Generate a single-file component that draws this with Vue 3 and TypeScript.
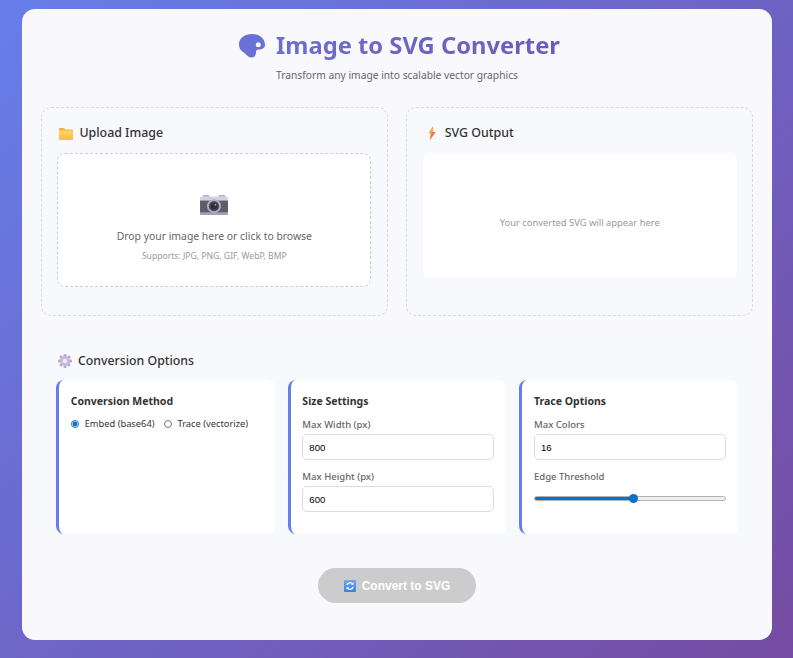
<template>
  <div class="page">
    <main class="card">
      <header class="head">
        <h1 class="title">
          <svg class="palette" viewBox="0 0 26 24" width="26" height="24">
            <path d="M0 10C0 4 6 0 13 0c7 0 13 4.500 13 11 0 3-3 4.500-6 4.500-2.500 0-3 1-3 3 0 3-2 5-4.500 5-3.500 0-5-3-7.500-5C2 17 0 14.500 0 10z" fill="#6a70d8" />
            <circle cx="19.300" cy="10.800" r="2.500" fill="#f8f8fd" />
          </svg>
          <span class="title-text">Image to SVG Converter</span>
        </h1>
        <p class="sub">Transform any image into scalable vector graphics</p>
      </header>

      <section class="panels">
        <div class="panel">
          <h2 class="panel-title">
            <svg viewBox="0 0 14 13" width="14" height="13">
              <defs>
                <linearGradient id="folder" x1="0" y1="0" x2="0" y2="1">
                  <stop offset="0" stop-color="#ffd65f" />
                  <stop offset="1" stop-color="#ffb84f" />
                </linearGradient>
              </defs>
              <path d="M0 2a1 1 0 0 1 1-1h4l1.500 1.500H13a1 1 0 0 1 1 1V12a1 1 0 0 1-1 1H1a1 1 0 0 1-1-1z" fill="#f7b23c" />
              <rect x="0" y="3.500" width="14" height="9.500" rx="1" fill="url(#folder)" />
            </svg>
            Upload Image
          </h2>
          <div class="drop">
            <svg class="camera" viewBox="0 0 30 21.500" width="30" height="20">
              <rect x="3" y="0" width="7" height="3" rx="1" fill="#b9b0cc" />
              <rect x="20" y="0" width="7" height="3" rx="1" fill="#b9b0cc" />
              <rect x="0" y="1.500" width="30" height="20" rx="2" fill="#d5cde2" />
              <rect x="0" y="6" width="30" height="13" fill="#5f5e68" />
              <rect x="0" y="19" width="30" height="2.500" fill="#a79cc0" />
              <circle cx="15" cy="12" r="7.500" fill="#b3adc0" />
              <circle cx="15" cy="12" r="5.500" fill="#4a4756" />
              <circle cx="15" cy="12" r="3.500" fill="#2f2c3d" />
              <circle cx="16.500" cy="10.500" r="1" fill="#9a96b0" />
            </svg>
            <p class="drop-text">Drop your image here or click to browse</p>
            <p class="drop-hint">Supports: JPG, PNG, GIF, WebP, BMP</p>
          </div>
        </div>
        <div class="panel">
          <h2 class="panel-title">
            <svg viewBox="-3 0 14 14" width="14" height="14">
              <path d="M5 0 .5 7.500H3L2 14l5.500-8H5z" fill="#f8a04a" />
              <path d="M3 7.500 2 14l5.500-8H5z" fill="#f2704a" />
            </svg>
            SVG Output
          </h2>
          <div class="output">Your converted SVG will appear here</div>
        </div>
      </section>

      <section class="options">
        <h2 class="options-title">
          <svg viewBox="0 0 14 14" width="14" height="14">
            <g fill="#b9a9d2">
              <rect v-for="a in [0, 45, 90, 135]" :key="a" x="5.500" y="0" width="3" height="14" rx="1" :transform="`rotate(${a} 7 7)`" />
            </g>
            <circle cx="7" cy="7" r="4.800" fill="#c6b9d9" />
            <circle cx="7" cy="7" r="2.300" fill="#f0ecf6" />
          </svg>
          Conversion Options
        </h2>
        <div class="option-grid">
          <div class="opt">
            <h3>Conversion Method</h3>
            <div class="radios">
              <label><input v-model="method" type="radio" value="embed" />Embed (base64)</label>
              <label><input v-model="method" type="radio" value="trace" />Trace (vectorize)</label>
            </div>
          </div>
          <div class="opt">
            <h3>Size Settings</h3>
            <label class="field">Max Width (px)<input v-model="maxWidth" type="number" /></label>
            <label class="field">Max Height (px)<input v-model="maxHeight" type="number" /></label>
          </div>
          <div class="opt">
            <h3>Trace Options</h3>
            <label class="field">Max Colors<input v-model="maxColors" type="number" /></label>
            <label class="field">Edge Threshold<input v-model="edge" class="range" type="range" min="0" max="100" :style="{ '--pct': edge + '%' }" /></label>
          </div>
        </div>
      </section>

      <div class="actions">
        <button type="button" class="convert" disabled>
          <svg viewBox="0 0 12 12" width="12" height="12">
            <defs>
              <linearGradient id="sync" x1="0" y1="0" x2="0" y2="1">
                <stop offset="0" stop-color="#6ea6f2" />
                <stop offset="1" stop-color="#3f7fe0" />
              </linearGradient>
            </defs>
            <rect width="12" height="12" rx="1" fill="url(#sync)" />
            <path d="M2.800 5.200A3.300 3.300 0 0 1 8.600 4M9.200 6.800A3.300 3.300 0 0 1 3.400 8" fill="none" stroke="#fff" stroke-width="1.200" />
            <path d="M9.500 2.200v2.600H6.900zM2.500 9.800V7.200h2.600z" fill="#fff" />
          </svg>
          Convert to SVG
        </button>
      </div>
    </main>
  </div>
</template>

<script setup lang="ts">
import { ref } from 'vue'

const method = ref('embed')
const maxWidth = ref(800)
const maxHeight = ref(600)
const maxColors = ref(16)
const edge = ref(52)
</script>

<style>
html, body { margin: 0; }
</style>

<style scoped>
.page { box-sizing: border-box; height: 658px; padding: 9px 21px 18px 22px; background: linear-gradient(135deg, #667eea 0%, #764ba2 100%); font-family: "Noto Sans", "Open Sans", "Liberation Sans", sans-serif; color: #333; overflow: hidden; }
.card { box-sizing: border-box; height: 631px; background: #f8f8fd; border-radius: 13px; padding: 17px 19px 0; }
.head { text-align: center; }
.title { margin: 0; padding-left: 5px; display: flex; justify-content: center; align-items: center; gap: 11px; height: 38px; font-size: 23.750px; line-height: 38px; font-weight: 700; }
.palette { flex: none; margin-top: 2px; }
.title-text { background: linear-gradient(135deg, #6b6fd2, #6e5ab6); -webkit-background-clip: text; background-clip: text; color: transparent; }
.sub { margin: 2px 0 0; font-size: 10.250px; line-height: 18px; color: #666; }
.panels { display: grid; grid-template-columns: 1fr 1fr; gap: 18.800px; margin-top: 23px; }
.panel { box-sizing: border-box; height: 209px; padding: 16px 15.400px 15px; background: #f8f9fc; border: 1px dashed #d8dbe0; border-radius: 10px; }
.panel-title { margin: 0 0 11px; padding-left: 2px; display: flex; align-items: center; gap: 6px; height: 18px; font-size: 12.400px; line-height: 18px; font-weight: 500; color: #333; }
.drop { box-sizing: border-box; height: 134px; background: #fff; border: 1px dashed #ccc; border-radius: 8px; display: flex; flex-direction: column; align-items: center; padding-top: 41px; }
.camera { flex: none; }
.drop-text { margin: 13px 0 0; font-size: 10.400px; line-height: 16px; color: #666; }
.drop-hint { margin: 5px 0 0; font-size: 8.600px; line-height: 14px; color: #999; }
.output { box-sizing: border-box; height: 125px; padding-top: 13px; background: #fff; border-radius: 8px; display: flex; align-items: center; justify-content: center; font-size: 9.400px; color: #999; }
.options { margin-top: 19px; height: 213px; padding: 16px 15px 15px; box-sizing: border-box; background: #f8f9fc; border-radius: 10px; }
.options-title { margin: 0 0 10px; padding-left: 2px; display: flex; align-items: center; gap: 6px; height: 19px; font-size: 12.300px; line-height: 18px; font-weight: 500; color: #333; }
.option-grid { display: grid; grid-template-columns: repeat(3, 1fr); gap: 13px; }
.opt { box-sizing: border-box; height: 154px; background: #fff; border-left: 3px solid #667eea; border-radius: 8px; padding: 13px 12.300px 12px 11.700px; }
.opt h3 { margin: 0 0 8px; font-size: 10.500px; line-height: 17px; font-weight: 700; color: #333; }
.radios { display: flex; gap: 9px; margin-top: -1px; font-size: 9.300px; line-height: 14px; color: #333; }
.radios label { display: flex; align-items: center; gap: 6px; }
.radios input { width: 8px; height: 8px; margin: 0; accent-color: #0b72c9; }
.field { display: block; font-size: 9.500px; line-height: 14px; font-weight: 500; color: #666; margin-bottom: 10px; }
.field input[type="number"] { display: block; box-sizing: border-box; width: 100%; height: 26px; margin-top: 2px; padding: 0 6px; border: 1px solid #ddd; border-radius: 5px; background: #fff; font-family: "Liberation Sans", Arial, sans-serif; font-size: 9.600px; color: #000; outline: none; appearance: textfield; }
.field input.range { display: block; width: 100%; height: 10px; margin: 9px 0 0; padding: 0; appearance: none; background: transparent; }
.range::-webkit-slider-runnable-track { box-sizing: border-box; height: 5px; border: 1px solid #b2b2b2; border-radius: 3px; background: linear-gradient(to right, #0b72c9 var(--pct), #efefef var(--pct)); }
.range::-webkit-slider-thumb { appearance: none; width: 9px; height: 9px; margin-top: -3px; border-radius: 50%; background: #0b72c9; }
.actions { display: flex; justify-content: center; margin-top: 20px; }
.convert { display: flex; align-items: center; justify-content: center; gap: 6px; width: 158px; height: 35px; border: none; border-radius: 18px; background: #ccc; color: #fff; font-family: "Liberation Sans", Arial, sans-serif; font-size: 12px; font-weight: 700; padding: 0; }
</style>
